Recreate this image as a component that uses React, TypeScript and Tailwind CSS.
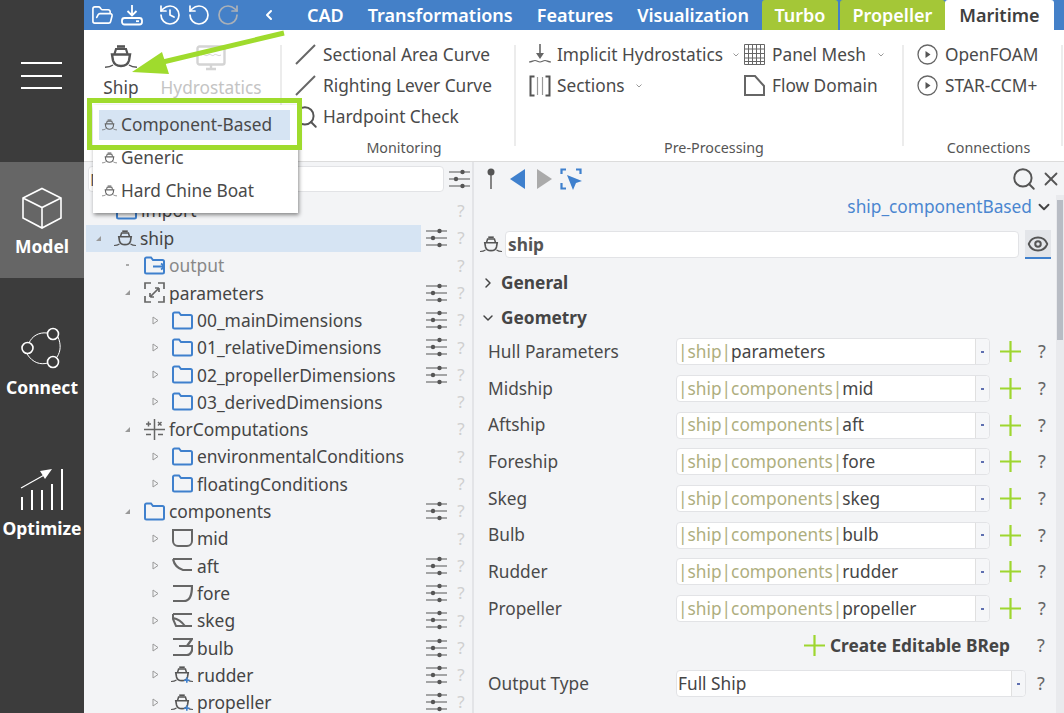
import React from "react";
import { FolderOpen, History, RotateCcw, RotateCw, ChevronLeft, ChevronDown, ChevronRight, Search, X, Eye } from "lucide-react";

const ShipIcon = ({ className = "", color = "#555", plus = false }: { className?: string; color?: string; plus?: boolean }) => (
  <svg viewBox="0 0 32 24" className={className} fill="none" stroke={color} strokeWidth="2.400">
    <path d="M12 1.500h8" strokeWidth="2.600" />
    <path d="M9.500 9l1.500-5h10l1.500 5" strokeWidth="2.200" />
    <path d="M7 9.500h18l-1 6c-1 3.500-3.500 5.500-8 5.500s-7-2-8-5.500z" />
    <path d="M0 22.300c3 0 5.500-.4 8-2.300M32 22.300c-3 0-5.500-.4-8-2.300" strokeWidth="1.500" />
    {plus && <path d="M23 16.500v7.500M19 20.300h8" stroke="#3f80cd" strokeWidth="2.400" />}
  </svg>
);

const Sliders = () => (
  <svg viewBox="0 0 21 20" className="w-[21px] h-[20px] shrink-0" stroke="#555" fill="#555">
    <path d="M0 3h21M0 10h21M0 17h21" strokeWidth="1.200" />
    <circle cx="13.500" cy="3" r="2.200" stroke="none" />
    <circle cx="7" cy="10" r="2.200" stroke="none" />
    <circle cx="13.500" cy="17" r="2.200" stroke="none" />
  </svg>
);

const Folder = ({ open = false }: { open?: boolean }) => (
  <svg viewBox="0 0 21 19" className="w-[21px] h-[19px]" fill="none" stroke="#3f80cd" strokeWidth="2">
    <path d="M1 16V3a1.500 1.500 0 0 1 1.500-1.500h4.500l2 2.500h9.500A1.500 1.500 0 0 1 20 5.500V16a1.500 1.500 0 0 1-1.500 1.500h-16A1.500 1.500 0 0 1 1 16z" />
    {open && <path d="M9 10.500h12M17 7.500l4 3-4 3" strokeWidth="1.800" />}
  </svg>
);

type IconKind = "folder" | "output" | "params" | "calc" | "mid" | "aft" | "fore" | "skeg" | "bulb" | "ship" | "shipPlus";

const TreeIcon = ({ kind }: { kind: IconKind }) => {
  if (kind === "folder") return <Folder />;
  if (kind === "output") return <Folder open />;
  if (kind === "ship") return <ShipIcon className="w-[22px] h-[17px]" />;
  if (kind === "shipPlus") return <ShipIcon plus className="w-[22px] h-[17px]" />;
  const p: Record<string, React.ReactNode> = {
    params: <path d="M7 1H1v6M14 1h6v6M1 14v6h6M20 14v6h-6M15 6L6 15M15 6h-4M15 6v4M6 15h4M6 15v-4" strokeWidth="1.700" />,
    calc: <path d="M10.500 0v21M0 10.500h21M2 5h5M4.500 2.500v5M14 3l3.500 3.500M17.500 3l-3.500 3.500M2 15.500h5M14 15.500h5" strokeWidth="1.500" />,
    mid: <path d="M1 2h19v11a5 5 0 0 1-5 5H6a5 5 0 0 1-5-5z" strokeWidth="2" />,
    aft: <path d="M1 4h19M1 4c1 5 3 9 10 11h9" strokeWidth="2.200" />,
    fore: <path d="M1 3h19c0 8-2 15-8 15H1" strokeWidth="2.200" />,
    skeg: <path d="M1 4h19M1 4v5l3 7h16M1 8c5 1 9 4 12 8" strokeWidth="2" />,
    bulb: <path d="M1 2h19l-5 7h5c1 4-1 9-5 9H1M7 9h8" strokeWidth="2.200" />,
  };
  return <svg viewBox="0 0 21 21" className="w-[21px] h-[21px]" fill="none" stroke="#666">{p[kind]}</svg>;
};

type Row = { name: string; level: number; icon: IconKind; state: "open" | "closed" | "leaf"; sliders?: boolean; muted?: boolean; selected?: boolean };

const rows: Row[] = [
  { name: "ship", level: 0, icon: "ship", state: "open", sliders: true, selected: true },
  { name: "output", level: 1, icon: "output", state: "leaf", muted: true },
  { name: "parameters", level: 1, icon: "params", state: "open", sliders: true },
  { name: "00_mainDimensions", level: 2, icon: "folder", state: "closed", sliders: true },
  { name: "01_relativeDimensions", level: 2, icon: "folder", state: "closed", sliders: true },
  { name: "02_propellerDimensions", level: 2, icon: "folder", state: "closed", sliders: true },
  { name: "03_derivedDimensions", level: 2, icon: "folder", state: "closed" },
  { name: "forComputations", level: 1, icon: "calc", state: "open" },
  { name: "environmentalConditions", level: 2, icon: "folder", state: "closed" },
  { name: "floatingConditions", level: 2, icon: "folder", state: "closed" },
  { name: "components", level: 1, icon: "folder", state: "open", sliders: true },
  { name: "mid", level: 2, icon: "mid", state: "closed" },
  { name: "aft", level: 2, icon: "aft", state: "closed", sliders: true },
  { name: "fore", level: 2, icon: "fore", state: "closed", sliders: true },
  { name: "skeg", level: 2, icon: "skeg", state: "closed", sliders: true },
  { name: "bulb", level: 2, icon: "bulb", state: "closed", sliders: true },
  { name: "rudder", level: 2, icon: "shipPlus", state: "closed", sliders: true },
  { name: "propeller", level: 2, icon: "shipPlus", state: "closed", sliders: true },
];

const Marker = ({ state }: { state: Row["state"] }) => {
  if (state === "leaf") return <span className="w-[3px] h-[2px] bg-[#aaa]" />;
  if (state === "open")
    return <svg viewBox="0 0 7 7" className="w-[7px] h-[7px]"><path d="M6 1v5H1z" fill="#999" /></svg>;
  return <svg viewBox="0 0 7 9" className="w-[7px] h-[9px]"><path d="M1 1l5 3.500-5 3.500z" fill="none" stroke="#999" /></svg>;
};

const TreeRow = ({ r }: { r: Row }) => (
  <div className="flex items-center h-[27.3px] shrink-0">
    <div
      className={`w-[335px] h-full flex items-center ${r.selected ? "bg-[#d6e4f3]" : ""} ${
        r.level === 0 ? "pl-[8px]" : r.level === 1 ? "pl-[37px]" : "pl-[65px]"
      }`}
    >
      <span className="w-[9px] flex justify-center shrink-0"><Marker state={r.state} /></span>
      <span className="w-[22px] ml-[11px] mr-[4px] flex justify-center shrink-0"><TreeIcon kind={r.icon} /></span>
      <span className={`text-[17.400px] whitespace-nowrap ${r.muted ? "text-[#888]" : "text-[#454545]"}`}>{r.name}</span>
    </div>
    <span className="w-[30px] flex justify-center">{r.sliders && <Sliders />}</span>
    <span className="w-[20px] text-center text-[17px] text-[#cfcfcf]">?</span>
  </div>
);

const Line = () => (
  <svg viewBox="0 0 21 21" className="w-[21px] h-[21px]"><path d="M1 20L20 1" stroke="#666" strokeWidth="2" /></svg>
);
const Play = () => (
  <svg viewBox="0 0 21 21" className="w-[21px] h-[21px]" fill="none">
    <circle cx="10.500" cy="10.500" r="9.500" stroke="#666" strokeWidth="1.300" />
    <path d="M8.500 7l5 3.500-5 3.500z" fill="#555" />
  </svg>
);
const Caret = () => (
  <svg viewBox="0 0 6 4" className="w-[6px] h-[4px]"><path d="M.5.500L3 3l2.500-2.500" fill="none" stroke="#999" strokeWidth="1" /></svg>
);

const RibbonRow = ({ icon, text, caret, capGap }: { icon: React.ReactNode; text: string; caret?: boolean; capGap?: string }) => (
  <div className="flex items-center h-[31px] whitespace-nowrap">
    <span className="w-[21px] h-[21px] flex items-center justify-center shrink-0">{icon}</span>
    <span className="ml-[7px] text-[17.300px] text-[#4a4a4a]">{text}</span>
    {caret && <span className={`${capGap} flex items-center`}><Caret /></span>}
  </div>
);

const GroupLabel = ({ children }: { children: React.ReactNode }) => (
  <div className="text-center text-[14.300px] text-[#555] h-[18px] leading-[18px]">{children}</div>
);

const fields = [
  ["Hull Parameters", "parameters", false],
  ["Midship", "mid", true],
  ["Aftship", "aft", true],
  ["Foreship", "fore", true],
  ["Skeg", "skeg", true],
  ["Bulb", "bulb", true],
  ["Rudder", "rudder", true],
  ["Propeller", "propeller", true],
] as const;

const GreenPlus = () => (
  <svg viewBox="0 0 21 21" className="w-[21px] h-[21px] shrink-0"><path d="M10.500 0v21M0 10.500h21" stroke="#9ed62f" strokeWidth="2.200" /></svg>
);

const Dropper = () => (
  <span className="w-[14px] h-full border-l border-[#e0e0e0] bg-[#f5f6f8] rounded-r flex items-center justify-center">
    <span className="w-[3px] h-[2px] bg-[#5e6fb0]" />
  </span>
);

const Field = ({ label, leaf, comp }: { label: string; leaf: string; comp: boolean }) => (
  <div className="flex items-center h-[36.7px] shrink-0">
    <span className="w-[188px] text-[17.300px] text-[#4a4a4a]">{label}</span>
    <div className="w-[314px] h-[27px] bg-white border border-[#e2e3e6] rounded flex items-center justify-between">
      <span className="pl-[1px] text-[17.300px] text-[#454545] whitespace-nowrap">
        <span className="text-[#aeae7e]">|ship|</span>
        {comp && <span className="text-[#aeae7e]">components|</span>}
        {leaf}
      </span>
      <Dropper />
    </div>
    <span className="ml-[10px]"><GreenPlus /></span>
    <span className="ml-[15px] text-[18px] text-[#666] w-[12px] text-center">?</span>
  </div>
);

const SideItem = ({ label, icon, active, h, pt, mt }: { label: string; icon: React.ReactNode; active?: boolean; h: string; pt: string; mt: string }) => (
  <div className={`${h} ${pt} flex flex-col items-center shrink-0 ${active ? "bg-[#666666]" : ""}`}>
    {icon}
    <span className={`${mt} text-[17.500px] font-bold text-white leading-[24px] whitespace-nowrap`}>{label}</span>
  </div>
);

const MenuRow = ({ text, active }: { text: string; active?: boolean }) => (
  <div className={`h-[30px] mb-[3.300px] flex items-center pl-[3px] ${active ? "bg-[#d6e4f3]" : ""}`}>
    <ShipIcon className="w-[15px] h-[12px]" color="#666" />
    <span className="ml-[4px] text-[17.300px] text-[#4a4a4a] whitespace-nowrap">{text}</span>
  </div>
);

const TopLabel = ({ children, ml }: { children: React.ReactNode; ml: string }) => (
  <span className={`${ml} text-[18px] font-semibold text-white whitespace-nowrap`}>{children}</span>
);

export default function App() {
  return (
    <div className="relative w-[1064px] h-[713px] overflow-hidden flex bg-[#f3f4f6]" style={{ fontFamily: '"Noto Sans", sans-serif' }}>
      {/* sidebar */}
      <aside className="w-[84px] shrink-0 bg-[#3c3c3c] flex flex-col">
        <div className="h-[162px] pt-[62px] pl-[21px] shrink-0 flex flex-col gap-[10.500px]">
          <span className="w-[41px] h-[2px] bg-white" />
          <span className="w-[41px] h-[2px] bg-white" />
          <span className="w-[41px] h-[2px] bg-white" />
        </div>
        <SideItem
          active
          label="Model"
          h="h-[116px]"
          pt="pt-[25px]"
          mt="mt-[5px]"
          icon={
            <svg viewBox="0 0 42 42" className="w-[42px] h-[42px]" fill="none" stroke="#fff" strokeWidth="1.600">
              <path d="M21 1.500l19 9.500v20l-19 10-19-10v-20zM2 11l19 9.500 19-9.500M21 20.500v20.500" />
            </svg>
          }
        />
        <SideItem
          label="Connect"
          h="h-[141px]"
          pt="pt-[49px]"
          mt="mt-[6px]"
          icon={
            <svg viewBox="0 0 42 42" className="w-[42px] h-[42px]" fill="none" stroke="#fff" strokeWidth="1.600">
              <path d="M8 16c3-7 10-11 18-10M37 10c3 7 3 14-1 20M27 36c-8 2-15 0-21-9" strokeWidth="1" />
              <circle cx="32" cy="7" r="5.500" />
              <circle cx="6.500" cy="21" r="5.500" />
              <circle cx="32" cy="35" r="5.500" />
            </svg>
          }
        />
        <SideItem
          label="Optimize"
          h="h-[141px]"
          pt="pt-[49px]"
          mt="mt-[6px]"
          icon={
            <svg viewBox="0 0 46 42" className="w-[46px] h-[42px]" fill="none" stroke="#fff" strokeWidth="2">
              <path d="M3 42V29M13 42V22M23 42V22M33 42V16M43 42V1" />
              <path d="M2 20L27 6" strokeWidth="1.200" />
              <path d="M33 1l-12 2 5 8z" fill="#fff" stroke="none" />
            </svg>
          }
        />
      </aside>

      <div className="flex-1 min-w-0 flex flex-col">
        {/* top bar */}
        <header className="h-[30px] shrink-0 bg-[#4480c8] flex items-center text-white">
          <FolderOpen className="ml-[7px] w-[23px] h-[23px]" strokeWidth={1.700} />
          <svg viewBox="0 0 22 22" className="ml-[7px] w-[22px] h-[22px]" fill="none" stroke="#fff" strokeWidth="1.800">
            <path d="M11 1v10M6.500 7l4.500 4.500L15.500 7" />
            <rect x="1" y="14" width="20" height="6.500" rx="2.500" />
            <path d="M15 17.200h3" />
          </svg>
          <History className="ml-[15px] w-[24px] h-[24px]" strokeWidth={1.700} />
          <RotateCcw className="ml-[5px] w-[24px] h-[24px]" strokeWidth={1.700} />
          <RotateCw className="ml-[5px] w-[24px] h-[24px] text-[#aab0b8]" strokeWidth={1.700} />
          <ChevronLeft className="ml-[21px] w-[16px] h-[16px]" strokeWidth={3} />
          <TopLabel ml="ml-[30px]">CAD</TopLabel>
          <TopLabel ml="ml-[24px]">Transformations</TopLabel>
          <TopLabel ml="ml-[24px]">Features</TopLabel>
          <TopLabel ml="ml-[24px]">Visualization</TopLabel>
          <div className="ml-[13px] h-full w-[76px] bg-[#a4c737] rounded-t-[3px] flex items-center justify-center">
            <TopLabel ml="ml-0">Turbo</TopLabel>
          </div>
          <div className="ml-[2px] h-full w-[105px] bg-[#a4c737] rounded-t-[3px] flex items-center justify-center">
            <TopLabel ml="ml-0">Propeller</TopLabel>
          </div>
          <div className="h-full w-[109px] bg-white rounded-t-[3px] flex items-center justify-center">
            <span className="text-[18px] font-semibold text-[#3f3f3f]">Maritime</span>
          </div>
        </header>

        {/* ribbon */}
        <section className="h-[132px] shrink-0 bg-white border-b border-[#dcdcdc] flex">
          <div className="w-[198px] shrink-0 border-r-2 border-[#ececec] my-[15px] relative flex">
            <div className="flex flex-col items-center ml-[19px] w-[36px]">
              <ShipIcon className="w-[32px] h-[24px]" />
              <span className="mt-[6px] text-[17.300px] text-[#4a4a4a]">Ship</span>
            </div>
            <div className="flex flex-col items-center ml-[22px] w-[100px]">
              <svg viewBox="0 0 30 26" className="w-[30px] h-[26px]" fill="none" stroke="#d4d4d4" strokeWidth="2.400">
                <rect x="1.500" y="1.500" width="27" height="18" rx="2" />
                <path d="M5 10c3-2 4 2 7 0s4 2 6 0 4 2 7 0" strokeWidth="1" />
                <path d="M10 24h10M15 20v4" strokeWidth="2.400" />
              </svg>
              <span className="mt-[4px] text-[17.300px] text-[#c4c4c4]">Hydrostatics</span>
            </div>
          </div>
          <div className="w-[234px] shrink-0 pl-[13px] border-r-2 border-[#ececec] my-[15px] flex flex-col">
            <div className="-mt-[6px]">
              <RibbonRow icon={<Line />} text="Sectional Area Curve" />
              <RibbonRow icon={<Line />} text="Righting Lever Curve" />
              <RibbonRow icon={<Search className="w-[26px] h-[26px] shrink-0 text-[#555]" strokeWidth={1.800} />} text="Hardpoint Check" />
            </div>
            <div className="mt-auto -mb-[11px] -ml-[1px]"><GroupLabel>Monitoring</GroupLabel></div>
          </div>
          <div className="w-[388px] shrink-0 pl-[13px] border-r-2 border-[#ececec] my-[15px] flex flex-col">
            <div className="flex -mt-[6px]">
              <div className="w-[215px]">
                <RibbonRow
                  icon={
                    <svg viewBox="0 0 24 22" className="w-[24px] h-[22px] shrink-0" fill="none" stroke="#666" strokeWidth="1.200">
                      <path d="M12 0v13" strokeWidth="1.600" />
                      <path d="M8 9h8l-4 6z" fill="#666" stroke="none" />
                      <path d="M1 18c3 0 4-1.500 6-1.500s3 1.500 5 1.500 3-1.500 5-1.500 3 1.500 6 1.500" />
                    </svg>
                  }
                  text="Implicit Hydrostatics"
                  caret
                  capGap="ml-[10px]"
                />
                <RibbonRow
                  icon={
                    <svg viewBox="0 0 22 22" className="w-[22px] h-[22px] shrink-0" fill="none" stroke="#555" strokeWidth="2">
                      <path d="M5.500 1.500H1.500v19h4M16.500 1.500h4v19h-4" />
                      <path d="M8.500 2v18M13.500 2v18" strokeWidth="1.200" stroke="#999" />
                    </svg>
                  }
                  text="Sections"
                  caret
                  capGap="ml-[11px]"
                />
              </div>
              <div>
                <RibbonRow
                  icon={
                    <svg viewBox="0 0 21 21" className="w-[21px] h-[21px]" fill="none" stroke="#666" strokeWidth="1">
                      <path d="M.5.500h20v20H.5zM4.500 0v21M8.500 0v21M12.500 0v21M16.500 0v21M0 5h21M0 9.500h21M0 14h21M0 17.500h21" />
                    </svg>
                  }
                  text="Panel Mesh"
                  caret
                  capGap="ml-[12px]"
                />
                <RibbonRow
                  icon={
                    <svg viewBox="0 0 21 21" className="w-[21px] h-[21px]" fill="none" stroke="#666" strokeWidth="2">
                      <path d="M1 1h10l9 10v9H1z" />
                    </svg>
                  }
                  text="Flow Domain"
                />
              </div>
            </div>
            <div className="mt-auto -mb-[11px] -ml-[3px]"><GroupLabel>Pre-Processing</GroupLabel></div>
          </div>
          <div className="w-[159px] shrink-0 pl-[12px] my-[15px] flex flex-col border-r-2 border-[#ececec]">
            <div className="-mt-[6px] pl-[1px]">
              <RibbonRow icon={<Play />} text="OpenFOAM" />
              <RibbonRow icon={<Play />} text="STAR-CCM+" />
            </div>
            <div className="mt-auto -mb-[11px] -ml-[4px] pl-[4px]"><GroupLabel>Connections</GroupLabel></div>
          </div>
        </section>

        {/* main */}
        <main className="flex-1 min-h-0 flex overflow-hidden">
          {/* tree */}
          <div className="w-[390px] shrink-0 border-r-2 border-[#e3e4e7] pl-[2px] flex flex-col overflow-hidden">
            <div className="h-[34.500px] shrink-0 flex items-center pl-[2px]">
              <div className="w-[356px] h-[26px] bg-white border border-[#e2e3e6] rounded text-[17px] text-[#555] pl-[1px] overflow-hidden">N</div>
              <span className="ml-[5px]"><Sliders /></span>
            </div>
            <div className="flex items-center h-[28px] shrink-0">
              <div className="w-[335px] pl-[30px] flex items-center gap-[4px] text-[17.400px] text-[#454545]">
                <Folder />
                <span>import</span>
              </div>
              <span className="w-[30px]" />
              <span className="w-[20px] text-center text-[17px] text-[#cfcfcf]">?</span>
            </div>
            {rows.map((r) => <TreeRow key={r.name} r={r} />)}
          </div>

          {/* properties */}
          <div className="flex-1 min-w-0 relative pl-[6px] pr-[8px] flex flex-col overflow-hidden">
            <div className="h-[33px] shrink-0 flex items-center">
              <svg viewBox="0 0 8 22" className="ml-[7px] w-[8px] h-[22px]">
                <circle cx="4" cy="4" r="3.500" fill="#555" />
                <path d="M4 6v15" stroke="#555" strokeWidth="1.400" />
              </svg>
              <svg viewBox="0 0 15 20" className="ml-[15px] w-[15px] h-[20px]"><path d="M15 0v20L0 10z" fill="#3f80cd" /></svg>
              <svg viewBox="0 0 15 20" className="ml-[12px] w-[15px] h-[20px]"><path d="M0 0v20l15-10z" fill="#aaa" /></svg>
              <svg viewBox="0 0 22 22" className="ml-[8px] w-[22px] h-[22px]" fill="none" stroke="#3f80cd" strokeWidth="2.200">
                <path d="M6 1.500H1.500V6M16 1.500h4.500V6M1.500 15v5.500H6" />
                <path d="M7 7l15 6-6 2-3 7z" fill="#3f80cd" stroke="none" />
              </svg>
              <Search className="ml-auto mr-[2.500px] w-[26px] h-[26px] text-[#555] shrink-0" strokeWidth={1.800} />
              <X className="-mr-[5.500px] w-[22px] h-[22px] text-[#555] shrink-0" strokeWidth={2} />
            </div>
            <div className="h-[24px] shrink-0 flex items-center justify-end pr-[3px]">
              <span className="text-[17.300px] text-[#4a86d0]">ship_componentBased</span>
              <ChevronDown className="ml-[3px] w-[18px] h-[18px] text-[#444]" strokeWidth={2.500} />
            </div>
            <div className="h-[41px] pt-[10px] shrink-0 flex items-center">
              <ShipIcon className="w-[22px] h-[17px] shrink-0" />
              <div className="ml-[3px] w-[514px] h-[27px] bg-white border border-[#e2e3e6] rounded pl-[2px] flex items-center text-[17.300px] font-bold text-[#555]">ship</div>
              <span className="ml-[6px] w-[26px] h-[29px] bg-[#e3e5e9] border-b-2 border-[#3f80cd] flex items-center justify-center">
                <Eye className="w-[24px] h-[22px] text-[#555]" strokeWidth={2.200} />
              </span>
            </div>
            <div className="h-[34px] mt-[6px] shrink-0 flex items-center">
              <ChevronRight className="w-[16px] h-[16px] text-[#444]" strokeWidth={2.200} />
              <span className="ml-[5px] text-[17.300px] font-bold text-[#454545]">General</span>
            </div>
            <div className="h-[34px] mt-[1px] -mb-[1.500px] shrink-0 flex items-center">
              <ChevronDown className="w-[16px] h-[16px] text-[#444]" strokeWidth={2.200} />
              <span className="ml-[5px] text-[17.300px] font-bold text-[#454545]">Geometry</span>
            </div>
            <div className="pl-[8px] flex flex-col">
              {fields.map(([l, v, c]) => <Field key={l} label={l} leaf={v} comp={c} />)}
              <div className="flex items-center justify-end h-[37px] shrink-0">
                <GreenPlus />
                <span className="ml-[5px] mr-[25px] text-[17.300px] font-bold text-[#454545]">Create Editable BRep</span>
                <span className="text-[18px] text-[#666] w-[12px] text-center mr-[9px]">?</span>
              </div>
              <div className="flex items-center h-[39px] shrink-0">
                <span className="w-[188px] text-[17.300px] text-[#4a4a4a]">Output Type</span>
                <div className="w-[350px] h-[27px] bg-white border border-[#e2e3e6] rounded flex items-center justify-between">
                  <span className="pl-[1px] text-[17.300px] text-[#454545]">Full Ship</span>
                  <Dropper />
                </div>
                <span className="ml-[9px] text-[18px] text-[#666] w-[12px] text-center">?</span>
              </div>
            </div>
            <div className="absolute right-0 top-[33px] bottom-0 w-[8px] bg-[#e9eaed]">
              <div className="mx-[1px] mt-[5px] h-[140px] bg-[#b8bcc4]" />
            </div>
          </div>
        </main>
      </div>

      {/* overlay menu */}
      <div className="absolute left-[93px] top-[105px] w-[205px] h-[108px] bg-white shadow-[1px_2px_4px_rgba(0,0,0,0.45)] pt-[4.500px] px-[6px]">
        <div className="w-[191px]">
          <MenuRow text="Component-Based" active />
          <MenuRow text="Generic" />
          <MenuRow text="Hard Chine Boat" />
        </div>
      </div>
      <div className="absolute left-[87px] top-[98px] w-[215px] h-[52px] border-[5px] border-[#9fdb2d]" />
      <svg className="absolute left-[125px] top-[28px] w-[165px] h-[50px]" viewBox="0 0 165 50">
        <path d="M159 5L38 34" stroke="#9fdb2d" strokeWidth="5" />
        <path d="M7 44L37 24l7 22z" fill="#9fdb2d" />
      </svg>
    </div>
  );
}
